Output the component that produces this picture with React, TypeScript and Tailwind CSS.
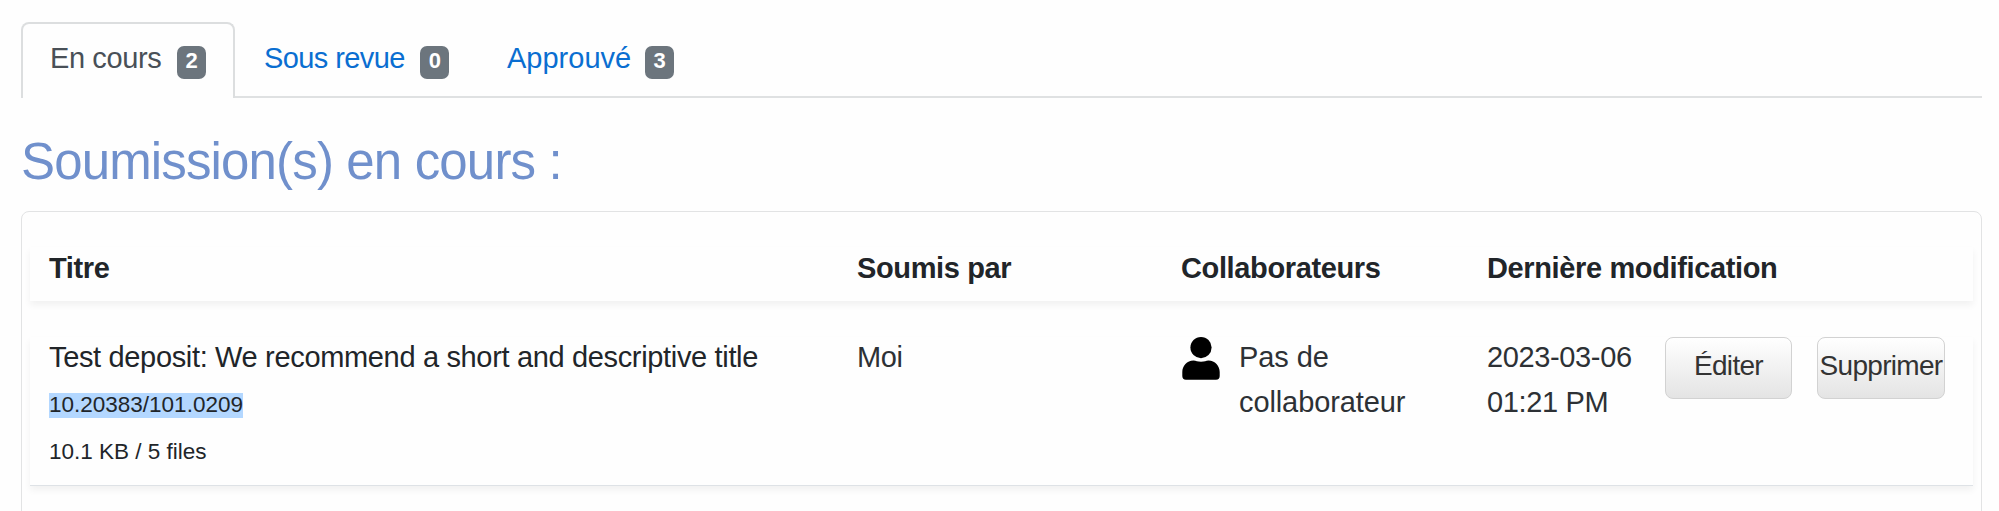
import type { ReactNode } from "react";

const columns =
  "grid grid-cols-[808px_324px_306px_178px_152px_1fr] items-start pl-[19px] tracking-[-0.37px]";
const rowShadow = "shadow-[0_4px_7px_rgba(0,0,0,0.055)]";

function Badge({ children }: { children: ReactNode }) {
  return (
    <span className="mt-[8px] flex h-[33px] w-[29px] justify-center rounded-[7px] bg-[#6c757d] text-[22px] leading-[29px] font-bold text-white">
      {children}
    </span>
  );
}

function Tab({
  label,
  count,
  className,
}: {
  label: string;
  count: number;
  className: string;
}) {
  return (
    <button
      className={"flex items-start whitespace-nowrap text-[29px] leading-[40px] " + className}
    >
      <span className="w-0 grow text-left">{label}</span>
      <Badge>{count}</Badge>
    </button>
  );
}

function ActionButton({ children, className }: { children: ReactNode; className: string }) {
  return (
    <button
      className={
        "flex h-[62px] justify-center rounded-[8px] border-[1.5px] border-[#d2d2d2] bg-linear-to-b from-white to-[#e4e4e4] text-[28px] leading-[56px] whitespace-nowrap text-[#333] " +
        className
      }
    >
      {children}
    </button>
  );
}

function UserIcon() {
  return (
    <svg viewBox="0 0 38 43" className="h-[43px] w-[38px] shrink-0" fill="#000">
      <circle cx="19" cy="10.6" r="10.6" />
      <path d="M11.5 23.5C14 23.5 15.5 24.8 19 24.8S24 23.5 26.5 23.5C33 23.5 37.7 29 37.7 35V39A3.7 3.7 0 0 1 34 42.7H4A3.7 3.7 0 0 1 .3 39V35C.3 29 5 23.5 11.5 23.5Z" />
    </svg>
  );
}

export default function App() {
  return (
    <div className="h-[511px] w-[1999px] overflow-hidden bg-[#fefefe] pt-[22px] pr-[17px] pl-[21px] font-['Liberation_Sans',Arial,sans-serif] text-[29px] leading-[45px] text-[#212529]">
      <nav className="flex h-[76px] border-b-2 border-[#dfe1e2]">
        <Tab
          label="En cours"
          count={2}
          className="h-[76px] w-[214px] rounded-t-[8px] border-2 border-b-0 border-[#dcdedf] bg-[#fefefe] pt-[14px] pr-[27px] pl-[27px] tracking-[-0.4px] text-[#495057]"
        />
        <Tab
          label="Sous revue"
          count={0}
          className="h-[74px] w-[214px] pt-[16px] pl-[29px] tracking-[-0.6px] text-[#0a6ed1]"
        />
        <Tab
          label="Approuvé"
          count={3}
          className="h-[74px] w-[225px] pt-[16px] pl-[58px] text-[#0a6ed1]"
        />
      </nav>

      <h1 className="mt-[32px] h-[81px] text-[51px] leading-[64px] tracking-[-0.85px] whitespace-nowrap text-[#7090cc]">
        Soumission(s) en cours :
      </h1>

      <section className="h-[340px] rounded-t-[8px] border-[1.5px] border-[#e2e3e4] px-[8px] pt-[35px]">
        <div
          className={
            columns + " h-[54px] leading-[42px] font-bold whitespace-nowrap " + rowShadow
          }
        >
          <span>Titre</span>
          <span>Soumis par</span>
          <span>Collaborateurs</span>
          <span>Dernière modification</span>
        </div>

        <div
          className={
            columns +
            " mt-[36px] h-[149px] border-b-[1.5px] border-[#dee2e6] whitespace-nowrap " +
            rowShadow
          }
        >
          <div className="-mt-[2px] flex flex-col items-start">
            <span className="tracking-[-0.34px]">
              Test deposit: We recommend a short and descriptive title
            </span>
            <span className="mt-[13px] h-[25px] bg-[#b3d7ff] text-[22.5px] leading-[24px] tracking-normal">
              10.20383/101.0209
            </span>
            <span className="mt-[21px] text-[22.5px] leading-[26px] tracking-normal">
              10.1 KB / 5 files
            </span>
          </div>
          <span className="-mt-[2px] text-[#2d3135]">Moi</span>
          <div className="flex gap-[19px] pl-[1px] tracking-[-0.1px] text-[#2d3135]">
            <UserIcon />
            <span className="-mt-[2px]">
              Pas de
              <br />
              collaborateur
            </span>
          </div>
          <span className="-mt-[2px] text-[#2d3135]">
            2023-03-06
            <br />
            01:21 PM
          </span>
          <ActionButton className="w-[127px] tracking-[-0.7px]">Éditer</ActionButton>
          <ActionButton className="w-[128px] tracking-[-0.7px]">Supprimer</ActionButton>
        </div>
      </section>
    </div>
  );
}
